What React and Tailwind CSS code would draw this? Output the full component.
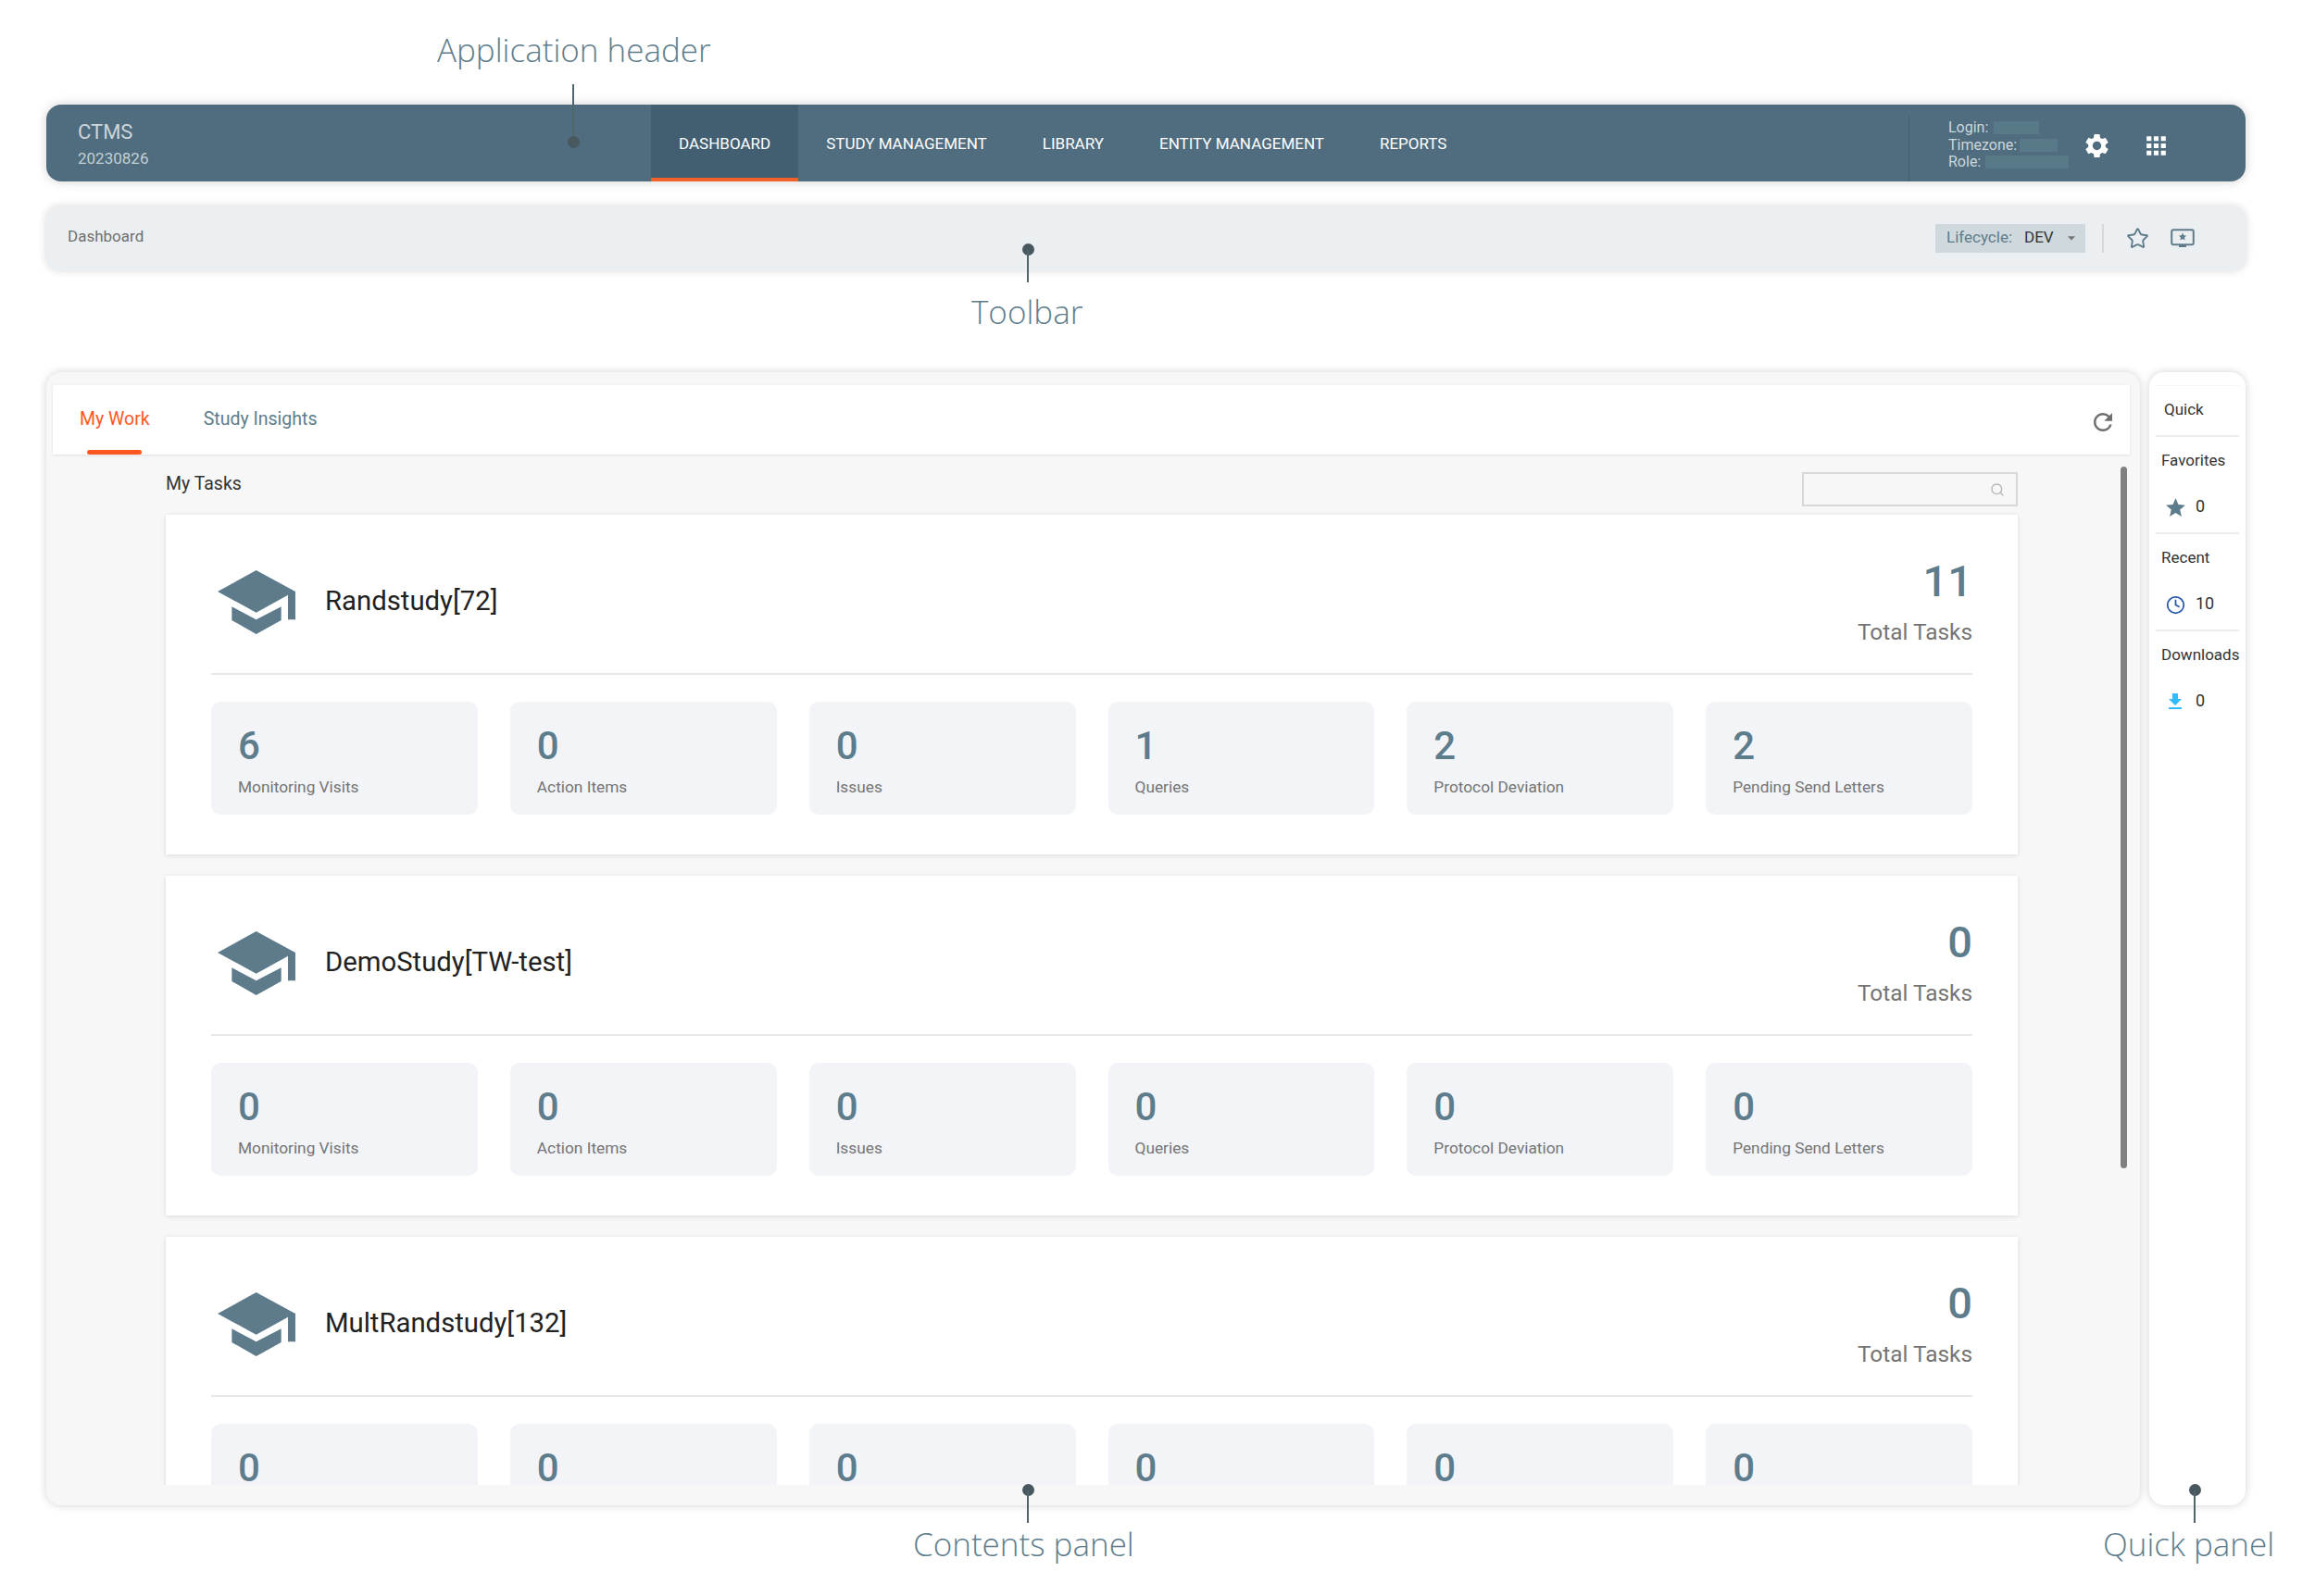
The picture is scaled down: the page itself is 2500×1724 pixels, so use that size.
import { Clock, Search, Star } from "lucide-react"
import { MdApps, MdFileDownload, MdRefresh, MdSettings, MdStar, MdArrowDropDown } from "react-icons/md"

const navItems = ["DASHBOARD", "STUDY MANAGEMENT", "LIBRARY", "ENTITY MANAGEMENT", "REPORTS"]

const studies = [
  { name: "Randstudy[72]", total: 11, counts: [6, 0, 0, 1, 2, 2] },
  { name: "DemoStudy[TW-test]", total: 0, counts: [0, 0, 0, 0, 0, 0] },
  { name: "MultRandstudy[132]", total: 0, counts: [0, 0, 0, 0, 0, 0] },
]

const labels = ["Monitoring Visits", "Action Items", "Issues", "Queries", "Protocol Deviation", "Pending Send Letters"]

function CapIcon() {
  return (
    <svg viewBox="30 28 252 207" className="w-[84px] h-[69px] ml-[7px] shrink-0" fill="#5e7b8b">
      <polygon points="155,28 282,97 282,188 258,188 258,108 155,165 30,97" />
      <polygon points="76,146 155,188 236,146 236,190 155,235 76,190" />
    </svg>
  )
}

function PresentIcon() {
  return (
    <svg viewBox="0 0 26 22" className="w-[26px] h-[22px]" fill="none">
      <rect x="1.2" y="1.2" width="23.6" height="16" rx="2" stroke="#5e7d8c" strokeWidth="2" />
      <path d="M9 20h8v-3H9z" fill="#5e7d8c" />
      <path d="M13 4.500l1.300 2.700 2.900.3-2.200 2 .6 2.900L13 11l-2.600 1.400.6-2.900-2.200-2 2.900-.3z" fill="#5e7d8c" />
    </svg>
  )
}

function Tile({ value, label }) {
  return (
    <div className="h-[122px] rounded-[10px] bg-[#f2f4f8] pt-[27px] pl-[29px]">
      <div className="text-[42px] leading-[42px] font-medium text-[#5e7d8c]">{value}</div>
      <div className="mt-[11px] text-[17.300px] leading-[24px] text-[#757575]">{label}</div>
    </div>
  )
}

function StudyCard({ study }) {
  return (
    <div className="h-[367px] shrink-0 mb-[23px] bg-white px-[49px] shadow-[0_1px_5px_rgba(0,0,0,0.12)]">
      <div className="h-[173px] pt-[17px] flex items-center justify-between border-b-2 border-[#e8e8e8]">
        <div className="flex items-center gap-[32px]">
          <CapIcon />
          <div className="text-[29.300px] text-[#212121]">{study.name}</div>
        </div>
        <div className="text-right pt-[1px]">
          <div className="text-[47px] leading-[47px] font-medium text-[#5e7d8c]">{study.total}</div>
          <div className="mt-[17px] text-[24.400px] leading-[30px] text-[#757575]">Total Tasks</div>
        </div>
      </div>
      <div className="mt-[29px] grid grid-cols-6 gap-[35px]">
        {study.counts.map((count, i) => (
          <Tile key={labels[i]} value={count} label={labels[i]} />
        ))}
      </div>
    </div>
  )
}

function QuickSection({ title, icon, count, last }) {
  return (
    <div className={`h-[105px] mx-[7px] pl-[6px] ${last ? "" : "border-b-2 border-[#ececec]"}`}>
      <div className="h-[52px] pt-[13px] text-[17px] leading-[24px] whitespace-nowrap text-[#333333]">{title}</div>
      <div className="flex items-center h-[48px]">
        <div className="w-[30px] flex justify-center">{icon}</div>
        <div className="ml-[7px] -mt-[3px] text-[18px] text-[#333333]">{count}</div>
      </div>
    </div>
  )
}

function Pin({ className }) {
  return <div className={`absolute w-[2px] bg-[#51656d] ${className}`} />
}

function Dot({ className }) {
  return <div className={`absolute w-[13px] h-[13px] rounded-full bg-[#47585e] ${className}`} />
}

function Note({ className, children }) {
  return (
    <div className={`absolute font-['Open_Sans',sans-serif] font-light text-[35px] leading-[50px] text-[#5e7d8c] whitespace-nowrap ${className}`}>
      {children}
    </div>
  )
}

export default function App() {
  return (
    <div className="relative w-[2500px] h-[1724px] overflow-hidden bg-white pt-[113px] pl-[50px] pr-[75px] font-['Roboto',sans-serif]">
      {/* Application header */}
      <header className="h-[83px] flex rounded-[16px] bg-[#4f6d7e] shadow-[0_0_12px_rgba(0,0,0,0.18)]">
        <div className="w-[653px] pl-[34px] pt-[16px]">
          <div className="text-[22px] leading-[28px] text-[#cdd6db]">CTMS</div>
          <div className="mt-[2px] text-[17px] leading-[24px] text-[#c3cfd5]">20230826</div>
        </div>
        <nav className="flex">
          {navItems.map((item, i) => (
            <div
              key={item}
              className={`h-[83px] px-[30px] pt-[6px] flex items-center text-[17px] text-white border-b-[4px] whitespace-nowrap ${i === 0 ? "bg-[#415f70] border-[#f4602c]" : "border-transparent"}`}
            >
              {item}
            </div>
          ))}
        </nav>
        <div className="ml-auto flex mr-[86px] h-[71px] mt-[12px] w-[278px] border-l border-[#47626f] pl-[42px]">
          <div className="w-[134px] shrink-0 text-[16px] leading-[18.500px] text-[#cdd6db] pt-[4px]">
            <div className="flex">Login:<span className="ml-[6px] w-[49px] h-[14px] mt-[2px] bg-[#587988]" /></div>
            <div className="flex">Timezone:<span className="ml-[3px] w-[41px] h-[14px] mt-[2px] bg-[#587988]" /></div>
            <div className="flex">Role:<span className="ml-[5px] w-[90px] h-[14px] mt-[2px] bg-[#587988]" /></div>
          </div>
          <div className="flex items-center -mt-[7px]">
            <MdSettings size={31} color="#ffffff" className="shrink-0 ml-[11px]" />
            <MdApps size={31} color="#ffffff" className="shrink-0 ml-[33px]" />
          </div>
        </div>
      </header>

      {/* Toolbar */}
      <div className="mt-[27px] h-[69px] flex items-center justify-between rounded-[14px] bg-[#eceff1] pl-[23px] pr-[55px] shadow-[0_0_10px_rgba(0,0,0,0.16)]">
        <div className="text-[17px] text-[#6f6f6f] -mt-[4px]">Dashboard</div>
        <div className="flex items-center">
          <div className="w-[162px] h-[31px] pl-[12px] pb-[2px] flex items-center bg-[#cfd8dc] text-[17px]">
            <span className="text-[#5e7d8c]">Lifecycle:</span>
            <span className="ml-[13px] text-[#333333]">DEV</span>
            <MdArrowDropDown size={20} color="#757575" className="ml-[9px]" />
          </div>
          <div className="ml-[18px] w-[2px] h-[31px] bg-[#d5d9db]" />
          <Star size={25} color="#5e7d8c" strokeWidth={1.8} className="ml-[24px]" />
          <div className="ml-[23px] flex"><PresentIcon /></div>
        </div>
      </div>

      <div className="mt-[110px] flex gap-[10px]">
        {/* Contents panel */}
        <div className="w-[2261px] h-[1224px] pt-[14px] pl-[7px] pr-[11px] rounded-[16px] bg-[#f7f7f7] shadow-[0_0_10px_rgba(0,0,0,0.18)]">
          <div className="h-[75px] flex items-start justify-between bg-white shadow-[0_1px_3px_rgba(0,0,0,0.1)] pl-[29px] pr-[14px]">
            <div className="flex gap-[58px]">
              <div className="relative h-[75px] pt-[22px] text-[19.500px] leading-[30px] text-[#ff5722]">
                My Work
                <div className="absolute left-[8px] bottom-0 w-[59px] h-[5px] rounded-full bg-[#ff5722]" />
              </div>
              <div className="pt-[22px] text-[19.500px] leading-[30px] text-[#5e7d8c]">Study Insights</div>
            </div>
            <MdRefresh size={30} color="#6f6f6f" className="mt-[25px]" />
          </div>
          <div className="relative h-[1113px] overflow-hidden">
            <div className="absolute right-[3px] top-[13px] w-[7px] h-[758px] rounded-full bg-[#808080]" />
            <div className="w-[2000px] ml-[122px]">
              <div className="h-[65px] flex items-start justify-between">
                <div className="mt-[20px] text-[19.500px] leading-[24px] text-[#333333]">My Tasks</div>
                <div className="mt-[19px] w-[233px] h-[37px] flex items-center justify-end pr-[12px] border-2 border-[#d8d8d8] bg-[#f7f7f7]">
                  <Search size={16} color="#b5b5b5" />
                </div>
              </div>
              {studies.map((study) => (
                <StudyCard key={study.name} study={study} />
              ))}
            </div>
          </div>
        </div>

        {/* Quick panel */}
        <div className="w-[104px] h-[1224px] pt-[14px] rounded-[16px] bg-white shadow-[0_0_10px_rgba(0,0,0,0.18)]">
          <div className="h-[56px] mx-[7px] pl-[9px] pt-[13px] text-[17px] leading-[24px] text-[#333333] border-y border-b-2 border-t-[#f5f5f5] border-b-[#ececec]">Quick</div>
          <QuickSection title="Favorites" count="0" icon={<MdStar size={25} color="#5e7d8c" />} />
          <QuickSection title="Recent" count="10" icon={<Clock size={21} color="#2458a8" />} />
          <QuickSection title="Downloads" count="0" last icon={<MdFileDownload size={24} color="#33bbff" />} />
        </div>
      </div>

      {/* Annotations */}
      <Note className="left-[472px] top-[29px]">Application header</Note>
      <Pin className="left-[618px] top-[91px] h-[60px]" />
      <Dot className="left-[613px] top-[147px]" />
      <Dot className="left-[1104px] top-[263px]" />
      <Pin className="left-[1109px] top-[270px] h-[35px]" />
      <Note className="left-[1049px] top-[312px]">Toolbar</Note>
      <Dot className="left-[1104px] top-[1603px]" />
      <Pin className="left-[1109px] top-[1610px] h-[35px]" />
      <Note className="left-[986px] top-[1643px]">Contents panel</Note>
      <Dot className="left-[2364px] top-[1603px]" />
      <Pin className="left-[2369px] top-[1610px] h-[35px]" />
      <Note className="left-[2271px] top-[1643px]">Quick panel</Note>
    </div>
  )
}
